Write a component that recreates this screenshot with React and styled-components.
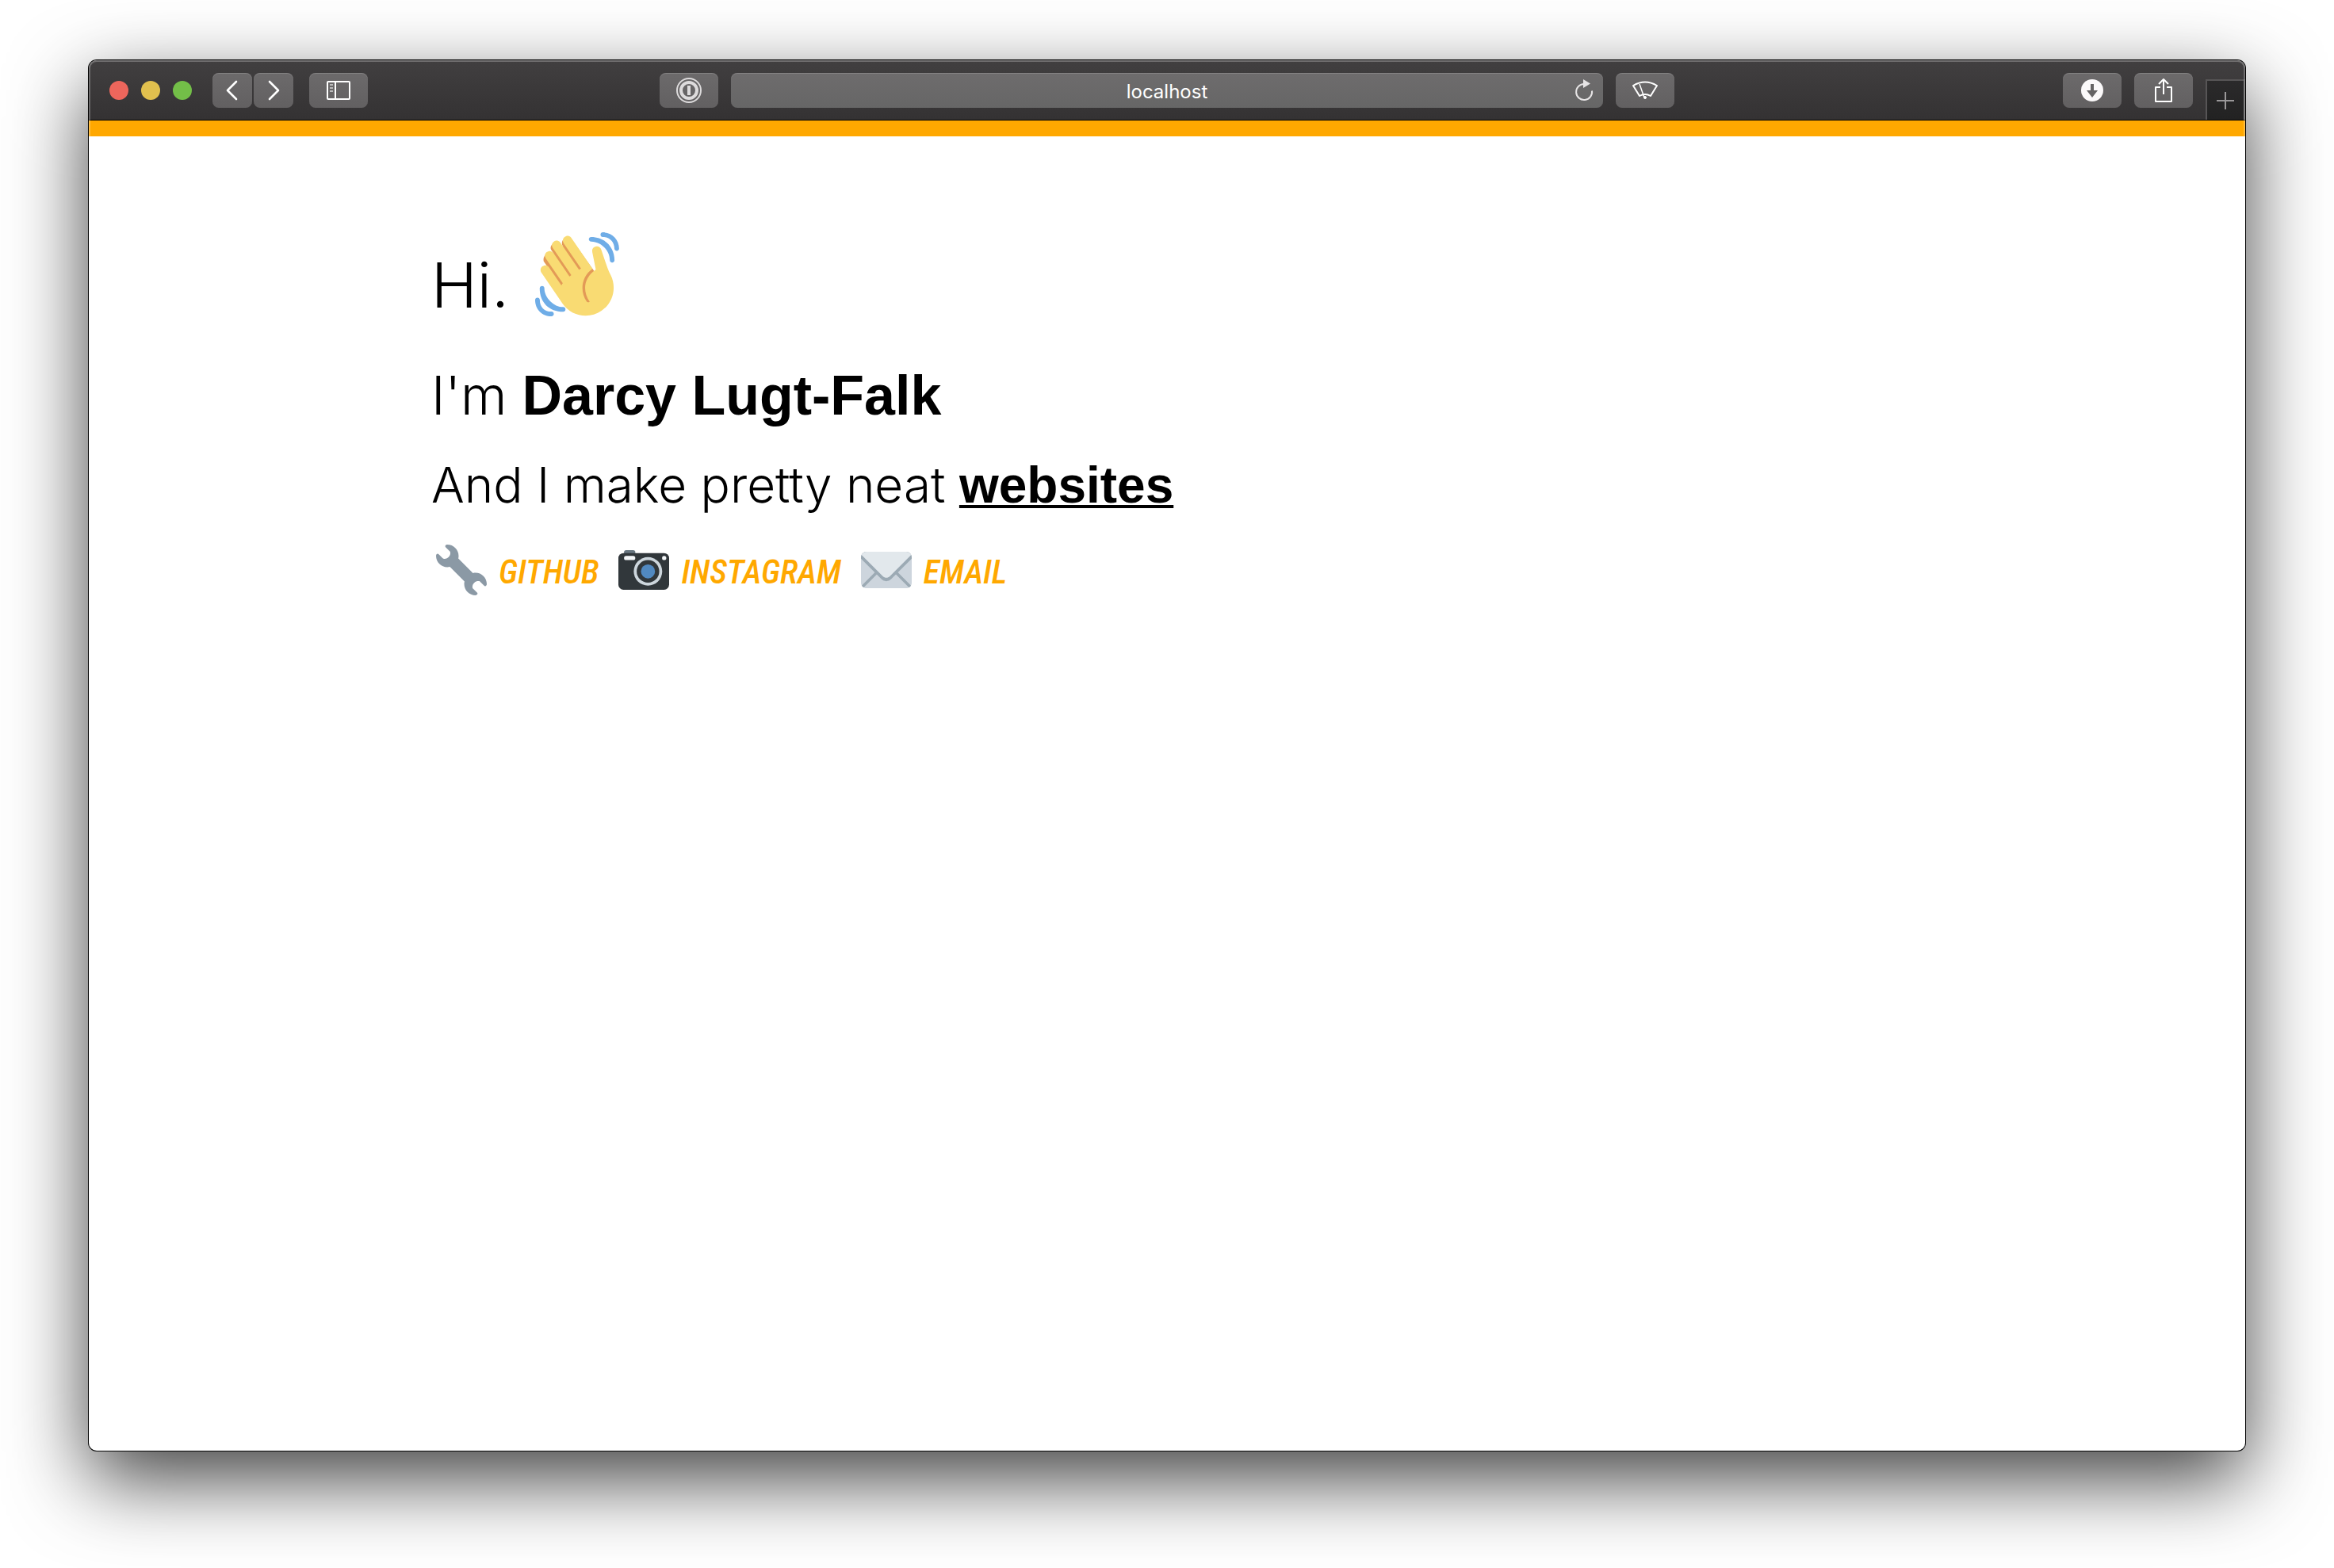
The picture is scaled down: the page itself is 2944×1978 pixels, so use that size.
import React from "react";
import styled, { createGlobalStyle, css } from "styled-components";

const GlobalStyle = createGlobalStyle`
  *, *::before, *::after { box-sizing: border-box; }
  body { margin: 0; background: #fff; color: #000; }
  button, input { font: inherit; color: inherit; }
  h1, p, ul { margin: 0; padding: 0; }
  svg { display: block; flex: none; }
`;

const Desktop = styled.div`
  display: flex;
  min-height: 100vh;
  padding: 76px 112px 148px;
`;

const Window = styled.div`
  position: relative;
  flex: 1;
  min-width: 0;
  display: flex;
  flex-direction: column;
  border-radius: 10px;
  background: #fff;
  box-shadow: 0 0 0 1px #000, 0 36px 100px rgba(0, 0, 0, 0.75);

  &::after {
    content: "";
    position: absolute;
    inset: 0;
    border-radius: inherit;
    box-shadow: inset 0 0 0 2px rgba(255, 255, 255, 0.26);
    pointer-events: none;
  }
`;

const Toolbar = styled.header`
  display: grid;
  grid-template-columns: 1fr minmax(0, 1280px) 1fr;
  height: 76px;
  border-bottom: 1px solid #000;
  border-radius: 10px 10px 0 0;
  background: linear-gradient(#413f40, #343233);
  color: #fff;
`;

const Group = styled.div`
  display: flex;
  align-items: flex-start;
  justify-content: ${(p) => p.$justify || "flex-start"};
  gap: ${(p) => p.$gap ?? 16}px;
  padding-top: ${(p) => (p.$flush ? 0 : 16)}px;
  min-width: 0;
`;

const TrafficLights = styled.div`
  display: flex;
  align-items: center;
  gap: 16px;
  height: 44px;
  padding: 0 26px;
`;

const Light = styled.button`
  width: 24px;
  height: 24px;
  padding: 0;
  border: 0;
  border-radius: 50%;
  background: ${(p) => p.$color};
`;

const raised = css`
  border: 0;
  border-radius: 8px;
  background: linear-gradient(#6c6a6b, #626061);
  box-shadow: inset 0 1px 0 rgba(255, 255, 255, 0.16);
`;

const ToolButton = styled.button`
  ${raised}
  display: grid;
  place-items: center;
  flex: none;
  width: ${(p) => (p.$narrow ? 50 : 74)}px;
  height: 44px;
  margin-top: ${(p) => (p.$drop ? 16 : 0)}px;
  padding: 0;
`;

const AddressBar = styled.div`
  position: relative;
  flex: 1;
  min-width: 0;
`;

const AddressInput = styled.input`
  ${raised}
  display: block;
  width: 100%;
  height: 44px;
  padding: 2px 60px 0;
  background: linear-gradient(#6e6c6d, #666);
  font-family: Inter, "Liberation Sans", sans-serif;
  font-size: 24px;
  text-align: center;
`;

const Reload = styled.button`
  position: absolute;
  top: 6px;
  right: 8px;
  display: grid;
  place-items: center;
  width: 32px;
  height: 32px;
  padding: 0;
  border: 0;
  background: none;
`;

const NewTab = styled.button`
  display: grid;
  place-items: center;
  align-self: flex-end;
  width: 50px;
  height: 51px;
  padding: 0;
  border: solid #575556;
  border-width: 2px 2px 0;
  background: linear-gradient(#2b2a2b, #222);
`;

const NavPair = styled.div`
  display: flex;
  gap: 2px;
  margin-right: 20px;
`;

const Page = styled.main`
  flex: 1;
  border-top: 20px solid #ffa800;
  font-family: Inter, "Liberation Sans", sans-serif;
  font-weight: 300;
`;

const Content = styled.div`
  max-width: 1856px;
  margin: 0 auto;
  padding: 121px 0 80px;
`;

const Greeting = styled.p`
  display: flex;
  align-items: flex-end;
  gap: 33px;
  margin-bottom: 58px;
  font-size: 78px;
  line-height: 78px;
`;

const Name = styled.h1`
  margin-bottom: 32px;
  font-size: 67px;
  font-weight: inherit;
  line-height: 84px;
`;

const Tagline = styled.p`
  margin-bottom: 36px;
  font-size: 62px;
  line-height: 78px;
`;

const Strong = styled.strong`
  font-family: "Liberation Sans", Arial, sans-serif;
  font-size: 70px;
  font-weight: 700;
`;

const SiteLink = styled.a`
  color: inherit;
  font-family: "Liberation Sans", Arial, sans-serif;
  font-size: 64px;
  font-weight: 700;
  text-decoration: underline;
  text-decoration-thickness: 4px;
  text-underline-offset: 3px;
  text-decoration-skip-ink: none;
`;

const Links = styled.ul`
  display: flex;
  flex-wrap: wrap;
  gap: 25px;
  padding-left: 6px;
  list-style: none;
`;

const LinkItem = styled.li`
  display: flex;
  align-items: center;
  gap: 15px;
`;

const SocialLink = styled.a`
  padding-top: 6px;
  color: #ffa800;
  font-family: "Roboto Condensed", Roboto, "Liberation Sans", sans-serif;
  font-size: 42px;
  font-style: italic;
  font-weight: 500;
  line-height: 58px;
  text-decoration: none;
`;

const Wave = () => (
  <svg width="106" height="106" viewBox="0 0 36 36" role="img" aria-label="Waving hand">
    <path fill="#e39a57" d="M4.861 9.147c.94-.657 2.357-.531 3.201.166l-.968-1.407c-.779-1.111-.5-2.313.612-3.093 1.112-.777 4.263 1.312 4.263 1.312-.786-1.122-.639-2.544.483-3.331 1.122-.784 2.67-.513 3.456.611l10.292 14.518L25 31l-9.822-2.134L3.746 12.6s-.783-1.8 1.115-3.453z" />
    <path fill="#f9db73" d="M2.695 17.336s-1.132-1.65.519-2.781c1.649-1.131 2.78.518 2.78.518l5.251 7.658c.181-.302.379-.6.6-.894L4.557 11.21s-1.131-1.649.519-2.78c1.649-1.131 2.78.518 2.78.518l6.855 9.997c.255-.208.516-.417.785-.622L7.549 6.732s-1.131-1.649.519-2.78c1.649-1.131 2.78.518 2.78.518l7.947 11.589c.292-.179.581-.334.871-.498L12.238 4.729s-1.131-1.649.518-2.78c1.649-1.131 2.78.518 2.78.518l7.854 11.454 1.194 1.742c-4.948 3.394-5.419 9.779-2.592 13.902.565.825 1.39.26 1.39.26-3.393-4.949-2.357-10.51 2.592-13.903L24.515 8.62s-.545-1.924 1.378-2.47c1.924-.545 2.47 1.379 2.47 1.379l1.685 5.004c.668 1.984 1.379 3.961 2.32 5.831 2.657 5.28 1.07 11.842-3.94 15.279-5.465 3.747-12.936 2.354-16.684-3.11L2.695 17.336z" />
    <g fill="#6fade7">
      <path d="M12 32.042C8 32.042 3.958 28 3.958 24c0-.553-.405-1-.958-1s-1.042.447-1.042 1C1.958 30 6 34.042 12 34.042c.553 0 1-.489 1-1.042s-.447-.958-1-.958z" />
      <path d="M7 34c-3 0-5-2-5-5 0-.553-.447-1-1-1s-1 .447-1 1c0 4 3 7 7 7 .553 0 1-.447 1-1s-.447-1-1-1zM24 2c-.552 0-1 .448-1 1s.448 1 1 1c4 0 8 3.589 8 8 0 .552.448 1 1 1s1-.448 1-1c0-5.514-4-10-10-10z" />
      <path d="M29 .042c-.552 0-1 .406-1 .958s.448 1.042 1 1.042c3 0 4.958 2.225 4.958 4.958 0 .552.489 1 1.042 1s.958-.448.958-1C35.958 3.163 33 .042 29 .042z" />
    </g>
  </svg>
);

const Wrench = () => (
  <svg width="64" height="64" viewBox="0 0 36 36" aria-hidden="true">
    <path fill="#8b99a5" d="M27.989 19.977c-.622 0-1.225.078-1.806.213L15.811 9.818c.134-.581.212-1.184.212-1.806C16.023 3.587 12.436 0 8.012 0 7.11 0 5.91.916 6.909 1.915l2.997 2.997s.999 1.998-.999 3.995-3.996.998-3.996.998L1.915 6.909C.916 5.91 0 7.105 0 8.012c0 4.425 3.587 8.012 8.012 8.012.622 0 1.225-.078 1.806-.212l10.371 10.371c-.135.581-.213 1.184-.213 1.806 0 4.425 3.588 8.011 8.012 8.011.901 0 2.101-.916 1.102-1.915l-2.997-2.997s-.999-1.998.999-3.995 3.995-.999 3.995-.999l2.997 2.997c1 .999 1.916-.196 1.916-1.102 0-4.425-3.587-8.012-8.011-8.012z" />
  </svg>
);

const Camera = () => (
  <svg width="64" height="64" viewBox="0 0 36 36" aria-hidden="true">
    <path fill="#687680" d="M4 8V5.500Q4 4 5.500 4h5Q12 4 12 5.500V8z" />
    <rect y="6" width="36" height="26" rx="3.600" fill="#31373b" />
    <circle cx="21" cy="19" r="10.100" fill="#cdd6dd" />
    <circle cx="21" cy="19" r="8" fill="#31373b" />
    <circle cx="21" cy="19" r="5" fill="#5189c1" />
    <rect x="4" y="8" width="8" height="3" rx="1.500" fill="#f5f8fa" />
    <circle cx="32.500" cy="9.500" r="1.500" fill="#f5f8fa" />
  </svg>
);

const Envelope = () => (
  <svg width="64" height="64" viewBox="0 0 36 36" aria-hidden="true">
    <path fill="#cdd5dd" d="M36 27c0 2.209-1.791 4-4 4H4c-2.209 0-4-1.791-4-4V9c0-2.209 1.791-4 4-4h28c2.209 0 4 1.791 4 4v18z" />
    <path fill="#9caab4" d="M11.95 17.636L.637 28.949c-.027.028-.037.063-.06.091.34.57.814 1.043 1.384 1.384.029-.023.063-.033.09-.059L13.365 19.05c.39-.391.39-1.023 0-1.414-.391-.391-1.024-.391-1.415 0M35.423 29.04c-.021-.028-.033-.063-.06-.09L24.051 17.636c-.392-.391-1.024-.391-1.415 0-.391.392-.391 1.024 0 1.414l11.313 11.314c.026.026.062.037.09.06.571-.341 1.044-.814 1.384-1.384" />
    <path fill="#9caab4" d="M32 5H4C1.791 5 0 6.791 0 9v1.030l14.528 14.496c1.894 1.893 4.988 1.893 6.884 0L36 10.009V9c0-2.209-1.791-4-4-4z" />
    <path fill="#e2e8ec" d="M32 5H4C2.387 5 1.008 5.962.375 7.334l15.160 15.126c1.360 1.359 3.568 1.359 4.930 0l15.160-15.126C34.992 5.962 33.613 5 32 5z" />
  </svg>
);

const Chevron = ({ forward }) => (
  <svg width="16" height="26" viewBox="0 0 16 26" fill="none" stroke="#fff" strokeWidth="2.600" strokeLinecap="round" strokeLinejoin="round" aria-hidden="true">
    <path d={forward ? "M3 2l11 11L3 24" : "M13 2L2 13l11 11"} />
  </svg>
);

const SidebarIcon = () => (
  <svg width="30" height="24" viewBox="0 0 30 24" fill="none" stroke="#fff" strokeWidth="2" aria-hidden="true">
    <rect x="1" y="1" width="28" height="22" rx="1" />
    <path d="M11 1v22" />
    <path d="M4 5h4M4 9h4M4 13h4" stroke="#bbb" />
  </svg>
);

const PasswordIcon = () => (
  <svg width="32" height="32" viewBox="0 0 32 32" fill="none" stroke="#dddbdc" aria-hidden="true">
    <circle cx="16" cy="16" r="15" strokeWidth="2" />
    <circle cx="16" cy="16" r="10" strokeWidth="4" />
    <path d="M16 10v12" strokeWidth="4" />
  </svg>
);

const ReloadIcon = () => (
  <svg width="24" height="28" viewBox="0 0 24 28" aria-hidden="true">
    <path d="M12 6A10 10 0 1 0 22 14.500" fill="none" stroke="#e6e4e5" strokeWidth="2" />
    <path d="M11 0l9 5.500-9 5.500z" fill="#e6e4e5" />
  </svg>
);

const WiperIcon = () => (
  <svg width="32" height="24" viewBox="0 0 32 24" fill="none" stroke="#fff" strokeWidth="2" strokeLinejoin="round" aria-hidden="true">
    <path d="M1 6Q16-3 31 6L23 19Q16 15 9 19z" />
    <path d="M9 4l6 17" strokeWidth="1.500" />
    <circle cx="16" cy="21" r="1.500" fill="#fff" strokeWidth="1" />
  </svg>
);

const DownloadIcon = () => (
  <svg width="28" height="28" viewBox="0 0 28 28" aria-hidden="true">
    <circle cx="14" cy="14" r="14" fill="#fbf9fa" />
    <path d="M12 6h4v8h5l-7 9-7-9h5z" fill="#656364" />
  </svg>
);

const ShareIcon = () => (
  <svg width="24" height="32" viewBox="0 0 24 32" fill="none" stroke="#fff" strokeWidth="2" strokeLinejoin="round" aria-hidden="true">
    <path d="M8 12H2v18h20V12h-6" />
    <path d="M12 21V3M6 8l6-6 6 6" />
  </svg>
);

const PlusIcon = () => (
  <svg width="22" height="22" viewBox="0 0 22 22" stroke="#9a9899" strokeWidth="2" aria-hidden="true">
    <path d="M11 0v22M0 11h22" />
  </svg>
);

const social = [
  { label: "GITHUB", Icon: Wrench },
  { label: "INSTAGRAM", Icon: Camera },
  { label: "EMAIL", Icon: Envelope },
];

export default function App() {
  return (
    <>
      <GlobalStyle />
      <Desktop>
        <Window>
          <Toolbar>
            <Group $gap={0}>
              <TrafficLights>
                <Light $color="#ed665c" aria-label="Close" />
                <Light $color="#e1c04e" aria-label="Minimize" />
                <Light $color="#73bf48" aria-label="Zoom" />
              </TrafficLights>
              <NavPair>
                <ToolButton $narrow aria-label="Back"><Chevron /></ToolButton>
                <ToolButton $narrow aria-label="Forward"><Chevron forward /></ToolButton>
              </NavPair>
              <ToolButton aria-label="Show sidebar"><SidebarIcon /></ToolButton>
            </Group>
            <Group>
              <ToolButton aria-label="Passwords"><PasswordIcon /></ToolButton>
              <AddressBar>
                <AddressInput type="text" aria-label="Address" defaultValue="localhost" />
                <Reload aria-label="Reload"><ReloadIcon /></Reload>
              </AddressBar>
              <ToolButton aria-label="Clean page"><WiperIcon /></ToolButton>
            </Group>
            <Group $justify="flex-end" $flush>
              <ToolButton $drop aria-label="Downloads"><DownloadIcon /></ToolButton>
              <ToolButton $drop aria-label="Share"><ShareIcon /></ToolButton>
              <NewTab aria-label="New tab"><PlusIcon /></NewTab>
            </Group>
          </Toolbar>
          <Page>
            <Content>
              <Greeting>Hi. <Wave /></Greeting>
              <Name>I'm <Strong>Darcy Lugt-Falk</Strong></Name>
              <Tagline>And I make pretty neat <SiteLink href="#websites">websites</SiteLink></Tagline>
              <Links>
                {social.map(({ label, Icon }) => (
                  <LinkItem key={label}>
                    <Icon />
                    <SocialLink href={`#${label.toLowerCase()}`}>{label}</SocialLink>
                  </LinkItem>
                ))}
              </Links>
            </Content>
          </Page>
        </Window>
      </Desktop>
    </>
  );
}
